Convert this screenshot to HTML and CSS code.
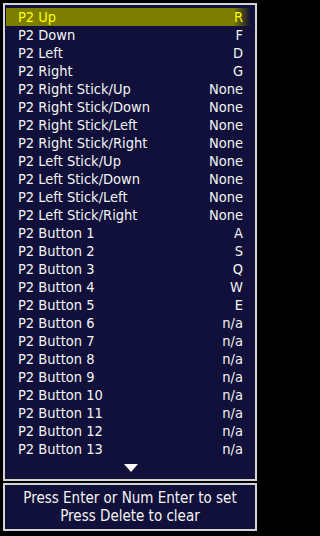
FILE: index.html
```html
<!DOCTYPE html>
<html>
<head>
<meta charset="utf-8">
<link rel="stylesheet" href="styles.css">
</head>
<body>
<div class="screen">
  <div class="panel list">
    <div class="row sel"><span>P2 Up</span><span>R</span></div>
    <div class="row"><span>P2 Down</span><span>F</span></div>
    <div class="row"><span>P2 Left</span><span>D</span></div>
    <div class="row"><span>P2 Right</span><span>G</span></div>
    <div class="row"><span>P2 Right Stick/Up</span><span>None</span></div>
    <div class="row"><span>P2 Right Stick/Down</span><span>None</span></div>
    <div class="row"><span>P2 Right Stick/Left</span><span>None</span></div>
    <div class="row"><span>P2 Right Stick/Right</span><span>None</span></div>
    <div class="row"><span>P2 Left Stick/Up</span><span>None</span></div>
    <div class="row"><span>P2 Left Stick/Down</span><span>None</span></div>
    <div class="row"><span>P2 Left Stick/Left</span><span>None</span></div>
    <div class="row"><span>P2 Left Stick/Right</span><span>None</span></div>
    <div class="row"><span>P2 Button 1</span><span>A</span></div>
    <div class="row"><span>P2 Button 2</span><span>S</span></div>
    <div class="row"><span>P2 Button 3</span><span>Q</span></div>
    <div class="row"><span>P2 Button 4</span><span>W</span></div>
    <div class="row"><span>P2 Button 5</span><span>E</span></div>
    <div class="row"><span>P2 Button 6</span><span>n/a</span></div>
    <div class="row"><span>P2 Button 7</span><span>n/a</span></div>
    <div class="row"><span>P2 Button 8</span><span>n/a</span></div>
    <div class="row"><span>P2 Button 9</span><span>n/a</span></div>
    <div class="row"><span>P2 Button 10</span><span>n/a</span></div>
    <div class="row"><span>P2 Button 11</span><span>n/a</span></div>
    <div class="row"><span>P2 Button 12</span><span>n/a</span></div>
    <div class="row"><span>P2 Button 13</span><span>n/a</span></div>
    <div class="more"><span class="arrow"></span></div>
  </div>
  <div class="panel help">
    <div>Press Enter or Num Enter to set</div>
    <div>Press Delete to clear</div>
  </div>
</div>
</body>
</html>
```
FILE: styles.css
```css
html, body {
  margin: 0;
  padding: 0;
  background: #000;
}
body {
  width: 263px;
  height: 536px;
  overflow: hidden;
  font-family: "DejaVu Sans Condensed", "DejaVu Sans", sans-serif;
  font-stretch: condensed;
  font-size: 14.5px;
  color: #f4f4f4;
}
.screen {
  width: 263px;
  box-sizing: border-box;
  display: flex;
  flex-direction: column;
  gap: 2px;
  padding: 3px 6px 0 3px;
}
.panel {
  background: #10103a;
  border: 2px solid #d4d4d4;
}
.list {
  height: 478px;
  padding: 3px 0 0 1px;
  box-sizing: border-box;
  display: flex;
  flex-direction: column;
}
.row {
  height: 18px;
  display: flex;
  justify-content: space-between;
  align-items: center;
  padding: 0 12px 0 12px;
  line-height: 18px;
  white-space: nowrap;
}
.row.sel {
  color: #ffff00;
  background: linear-gradient(to right, #7d7d00 0%, #7d7d00 93%, #10103a 100%);
  margin-right: 4px;
  padding-right: 8px;
}
.more {
  display: flex;
  justify-content: center;
  padding-top: 6px;
}
.arrow {
  width: 0;
  height: 0;
  border-left: 7px solid transparent;
  border-right: 7px solid transparent;
  border-top: 8px solid #fff;
}
.help {
  height: 48px;
  box-sizing: border-box;
  display: flex;
  flex-direction: column;
  justify-content: center;
  align-items: center;
  font-size: 15px;
  line-height: 18px;
}
```
